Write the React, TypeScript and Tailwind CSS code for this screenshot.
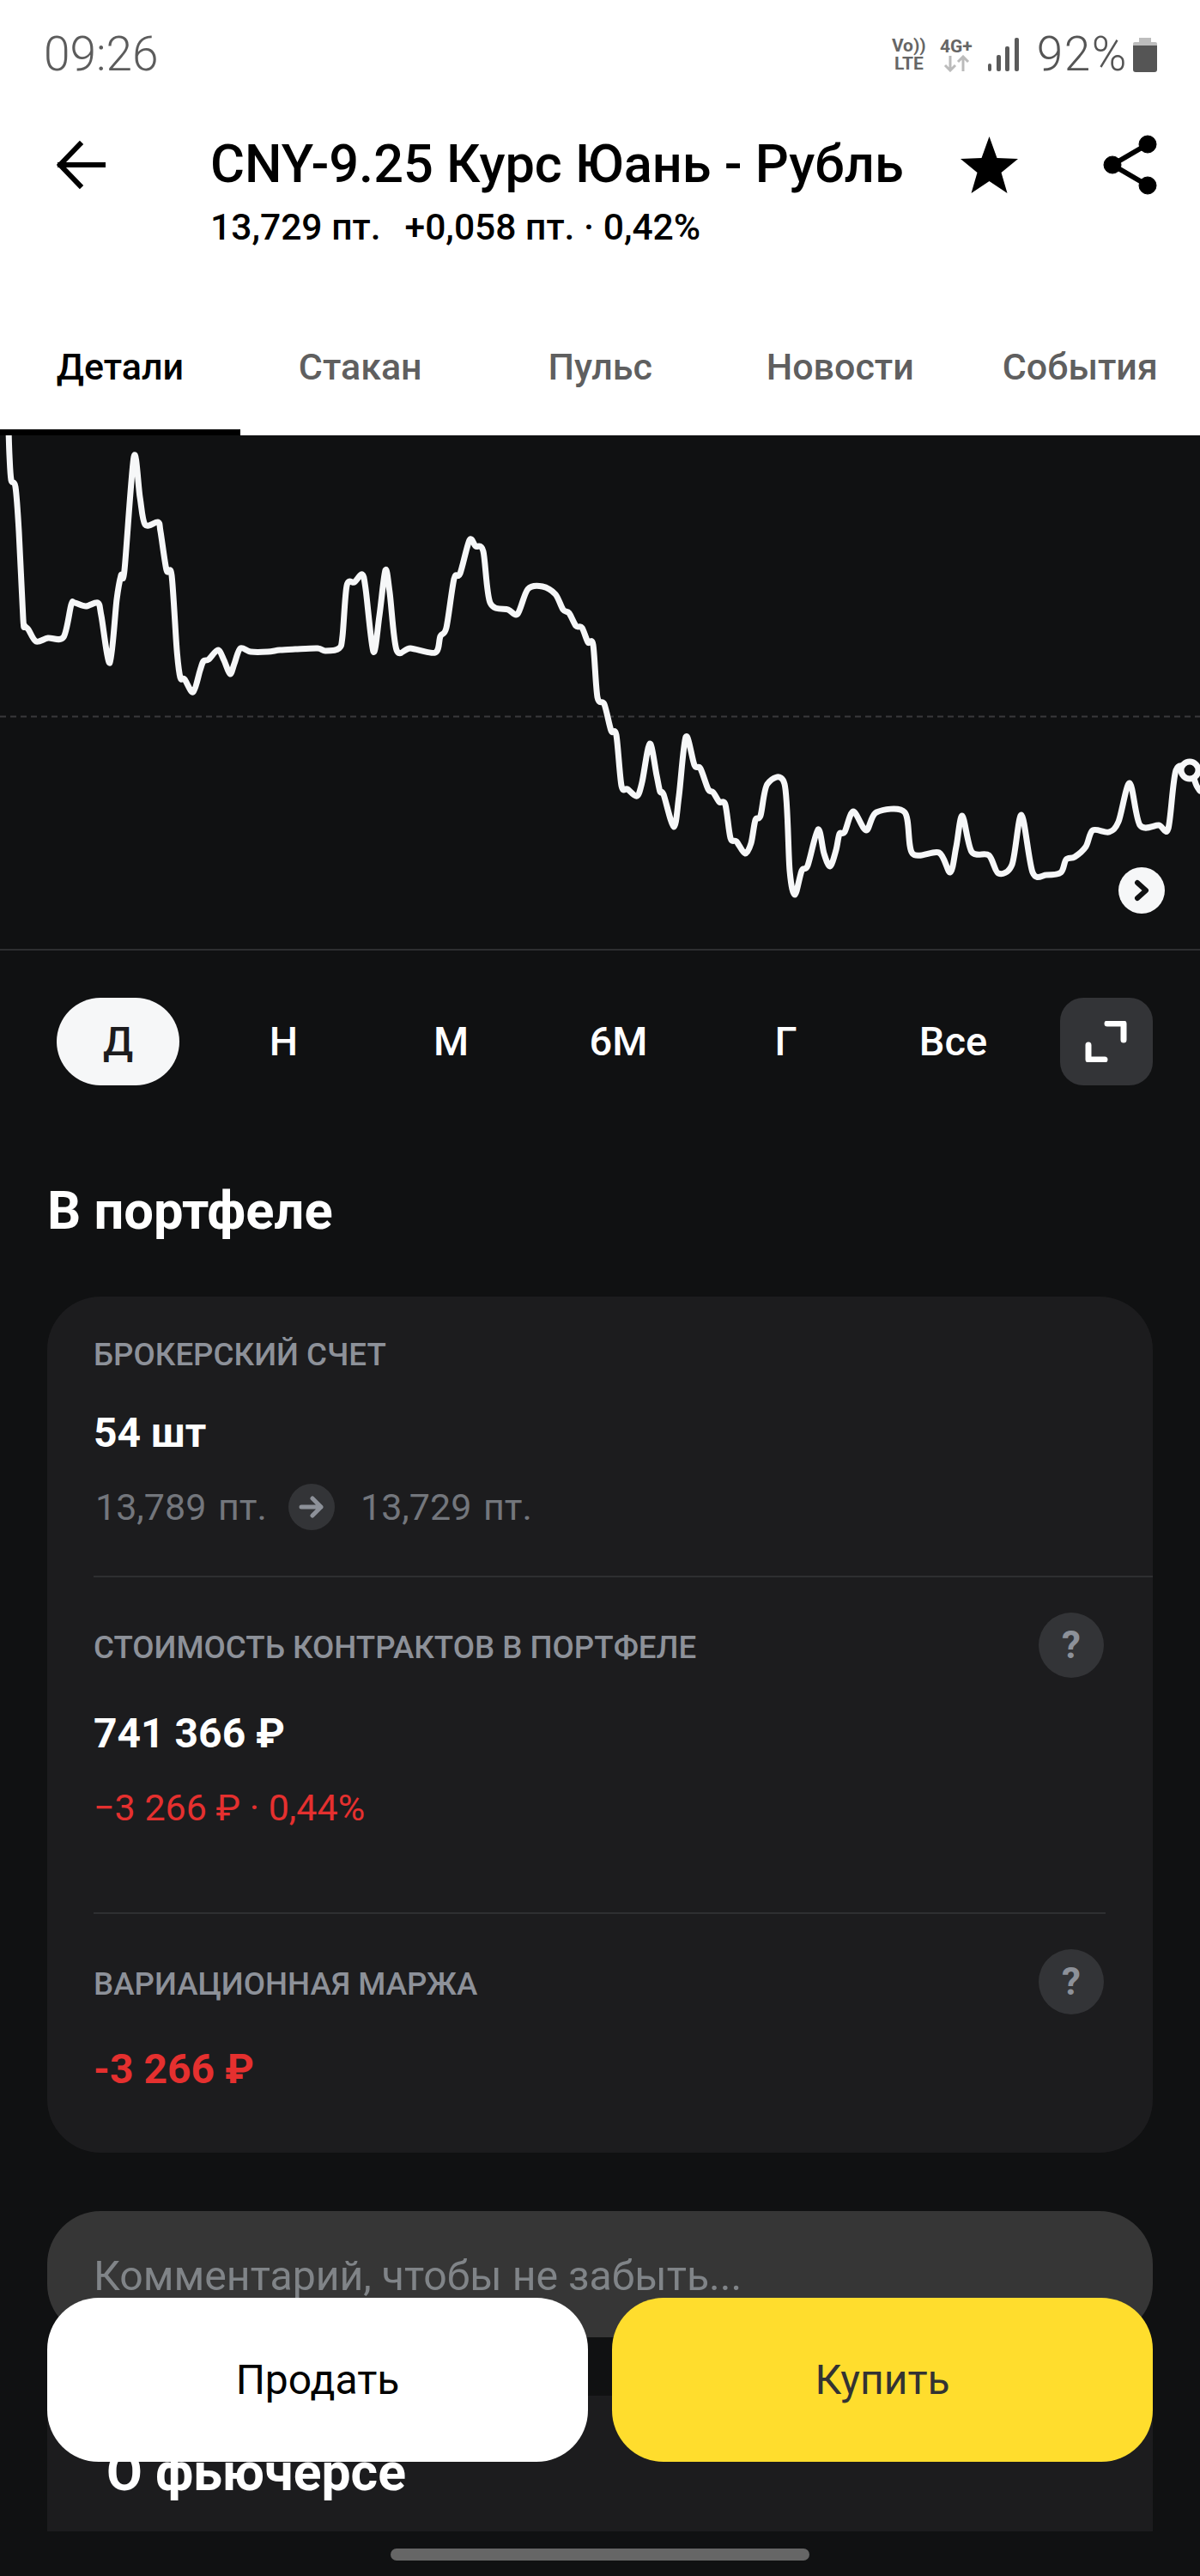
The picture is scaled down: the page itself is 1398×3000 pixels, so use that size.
import React from "react";

const pts: [number, number][] = [
[10,500],[11,530],[13,559],[18,567],[22,619],[27,721],[29,729],[33,733],[42,747],[56,743],[74,742],[83,704],[87,702],[100,706],[114,702],[118,717],[128,772],[136,698],[141,670],[145,664],[156,532],[163,579],[169,611],[184,608],[187,619],[194,664],[200,670],[206,757],[210,789],[215,791],[225,806],[233,781],[237,770],[243,768],[254,757],[261,769],[268,785],[273,773],[280,755],[292,759],[312,759],[326,757],[344,756],[370,755],[379,758],[395,755],[399,741],[404,682],[413,678],[422,669],[426,686],[435,759],[442,717],[449,664],[454,690],[462,757],[478,755],[507,760],[513,741],[520,731],[529,674],[536,668],[547,629],[554,636],[563,642],[571,702],[592,710],[603,715],[615,686],[632,683],[647,692],[656,710],[663,714],[671,729],[678,731],[685,748],[691,751],[696,812],[704,820],[712,851],[718,856],[724,915],[731,919],[742,927],[748,911],[757,866],[765,903],[769,922],[773,925],[785,963],[791,927],[799,858],[809,891],[816,895],[825,919],[831,923],[838,934],[845,937],[851,976],[858,980],[868,994],[875,982],[880,955],[886,950],[894,913],[914,913],[920,1014],[926,1042],[934,1014],[941,1008],[953,966],[960,994],[967,1009],[974,990],[978,971],[984,969],[994,945],[1009,967],[1021,946],[1054,946],[1063,994],[1094,993],[1107,1016],[1114,986],[1121,950],[1132,992],[1152,996],[1163,1017],[1179,1007],[1190,949],[1203,1016],[1219,1019],[1236,1016],[1242,1001],[1252,998],[1265,986],[1273,967],[1292,969],[1303,957],[1316,912],[1328,961],[1350,961],[1361,965],[1370,897],[1386,897],[1394,915],[1398,921]
];

function smooth(p: [number, number][]) {
  let d = `M${p[0][0]} ${p[0][1] - 507}`;
  for (let i = 0; i < p.length - 1; i++) {
    const a = p[Math.max(0, i - 1)], b = p[i], c = p[i + 1], e = p[Math.min(p.length - 1, i + 2)];
    const k = 0.15;
    d += ` C${b[0] + (c[0] - a[0]) * k} ${b[1] - 507 + (c[1] - a[1]) * k} ${c[0] - (e[0] - b[0]) * k} ${c[1] - 507 - (e[1] - b[1]) * k} ${c[0]} ${c[1] - 507}`;
  }
  return d;
}

function Help() {
  return (
    <div className="w-[76px] h-[76px] rounded-full bg-[#333437] flex items-center justify-center text-[44px] font-bold text-[#8d9199] leading-none">?</div>
  );
}

const periods = ["Н", "М", "6М", "Г", "Все"];

export default function App() {
  return (
    <div className="relative w-[1398px] h-[3000px] overflow-hidden bg-[#101112] font-['Roboto',sans-serif]">
      <div className="bg-white h-[507px] relative">
        {/* status bar */}
        <div className="h-[127px] pl-[51px] pr-[50px] flex items-center justify-between">
          <span className="text-[55px] text-[#5c5c5c] leading-none font-light">09:26</span>
          <div className="flex items-center text-[#555]">
            <div className="w-[40px] flex flex-col items-center font-bold text-[21px] leading-[21px] text-[#666] whitespace-nowrap">
              <span>Vo))</span><span>LTE</span>
            </div>
            <div className="w-[40px] ml-[15px] flex flex-col items-center">
              <span className="font-bold text-[21px] leading-[20px] text-[#666] whitespace-nowrap">4G+</span>
              <svg width="32" height="20" viewBox="0 0 32 20" fill="none" stroke="#bbb" strokeWidth="3">
                <path d="M9 1v17M3 12l6 6 6-6" /><path d="M24 19V2M18 8l6-6 6 6" />
              </svg>
            </div>
            <svg width="38" height="40" viewBox="0 0 38 40" className="ml-[16px]" fill="#5a5a5a">
              <rect x="1" y="30" width="4" height="9" rx="2" /><rect x="11" y="20" width="5" height="19" rx="2" /><rect x="21" y="10" width="5" height="29" rx="2" /><rect x="32" y="0" width="5" height="39" rx="2" />
            </svg>
            <span className="ml-[20px] text-[55px] leading-none font-light text-[#555] tracking-[1.5px]">92%</span>
            <svg width="28" height="40" viewBox="0 0 28 40" className="ml-[6px]">
              <rect x="7" y="0" width="14" height="6" fill="#bdbdbd" />
              <rect x="0" y="5" width="28" height="6" rx="2" fill="#bdbdbd" />
              <path d="M0 9h28v28a3 3 0 0 1-3 3H3a3 3 0 0 1-3-3z" fill="#555" />
            </svg>
          </div>
        </div>
        {/* header */}
        <div className="flex items-start h-[171px]">
          <svg width="58" height="58" viewBox="0 0 58 58" fill="none" stroke="#000" strokeWidth="6" strokeLinecap="square" className="ml-[66px] mt-[36px]">
            <path d="M4 29h50M27 5 4 29l23 24" />
          </svg>
          <div className="ml-[121px] w-[860px] shrink-0 mt-[29px]">
            <div className="text-[61.300px] leading-[70px] font-medium text-black whitespace-nowrap">CNY-9.25 Курс Юань - Рубль</div>
            <div className="text-[42.600px] leading-[50px] mt-[13px] font-medium text-black whitespace-nowrap flex">
              <span>13,729 пт.</span>
              <span className="ml-[28px]">+0,058 пт. · 0,42%</span>
            </div>
          </div>
          <svg width="68" height="66" viewBox="0 0 68 66" className="mt-[32px] ml-[14px]" fill="#000">
            <path d="M33.500 0l9 25 24.500 1-19.500 16 7 24-21-14-21 14 7-24L0 26l24.500-1z" />
          </svg>
          <svg width="64" height="70" viewBox="0 0 64 70" className="ml-[98px] mt-[30px]" fill="#000" stroke="#000">
            <path d="M52 11 11 35l41 24" fill="none" strokeWidth="6" />
            <circle cx="52" cy="11" r="10" /><circle cx="11" cy="35" r="10" /><circle cx="52" cy="59" r="10" />
          </svg>
        </div>
        {/* tabs */}
        <div className="flex h-[209px] items-start">
          <div className="w-[280px] h-[209px] flex items-end justify-center pb-[55px] relative text-[43px] font-medium text-black">
            <span className="leading-[50px]">Детали</span>
            <div className="absolute left-0 right-0 bottom-0 h-[7px] bg-black" />
          </div>
          {["Стакан", "Пульс", "Новости", "События"].map((t) => (
            <div key={t} className="w-[279.500px] h-[209px] flex items-end justify-center pb-[55px] text-[43px] font-medium text-[#5f5f5f]">
              <span className="leading-[50px]">{t}</span>
            </div>
          ))}
        </div>
      </div>

      {/* chart */}
      <div className="relative h-[600px] border-b-2 border-[#2d2e30]">
        <svg width="1398" height="598" viewBox="0 0 1398 598" className="block" fill="none">
          <path d="M0 327.500H1398" stroke="#39393b" strokeWidth="2" strokeDasharray="7 5" />
          <path d={smooth(pts)} stroke="#f6f7f8" strokeWidth="7" strokeLinejoin="round" strokeLinecap="round" />
          <circle cx="1386" cy="390" r="10" fill="#101112" stroke="#f6f7f8" strokeWidth="7" />
        </svg>
        <div className="absolute left-[1303px] top-[503px] w-[54px] h-[54px] rounded-full bg-[#f6f7f8] flex items-center justify-center">
          <svg width="22" height="26" viewBox="0 0 22 26" fill="none" stroke="#101112" strokeWidth="6" strokeLinecap="round" strokeLinejoin="round">
            <path d="M6 4l10 9-10 9" />
          </svg>
        </div>
      </div>

      {/* periods */}
      <div className="flex items-center h-[102px] mt-[55px] pl-[66px]">
        <div className="w-[143px] h-[102px] rounded-full bg-[#f6f7f8] text-[#1c1c1e] flex items-center justify-center text-[47px] font-medium">Д</div>
        <div className="flex ml-[24px]">
          {periods.map((p) => (
            <div key={p} className="w-[195px] text-center text-[47px] font-medium text-white leading-[102px]">{p}</div>
          ))}
        </div>
        <div className="ml-[27px] w-[108px] h-[102px] rounded-[27px] bg-[#333437] flex items-center justify-center">
          <svg width="50" height="48" viewBox="0 0 50 48" fill="none" stroke="#fff" strokeWidth="7" strokeLinecap="round" strokeLinejoin="round">
            <path d="M26 3h19v19M4 28v17h19" />
          </svg>
        </div>
      </div>

      <div className="ml-[55px] mt-[111px] text-[61.500px] leading-[70px] font-bold text-white">В портфеле</div>

      {/* portfolio card */}
      <div className="ml-[55px] mt-[65px] w-[1288px] h-[997px] rounded-[62px] bg-[#1c1c1e] pl-[54px] overflow-hidden">
        <div className="border-b-2 border-[#2e2f31] h-[327px] pt-[44px]">
          <div className="text-[36.700px] leading-[48px] font-medium text-[#8d9199]">БРОКЕРСКИЙ СЧЕТ</div>
          <div className="mt-[39px] text-[48px] leading-[56px] font-bold text-white">54 шт</div>
          <div className="mt-[31px] flex items-center text-[43px] leading-[54px] text-[#73767c] [word-spacing:3px]">
            <span className="ml-[2px] w-[225px] whitespace-pre">13,789 пт.</span>
            <div className="w-[54px] h-[54px] rounded-full bg-[#333437] flex items-center justify-center">
              <svg width="30" height="26" viewBox="0 0 30 26" fill="none" stroke="#8d9199" strokeWidth="5" strokeLinecap="round" strokeLinejoin="round">
                <path d="M3 13h23M16 3l10 10-10 10" />
              </svg>
            </div>
            <span className="ml-[30px] whitespace-pre">13,729 пт.</span>
          </div>
        </div>
        <div className="border-b-2 border-[#2e2f31] h-[392px] mr-[55px]">
          <div className="flex items-start justify-between pr-[2px] pt-[41px]">
            <div className="text-[36.700px] leading-[48px] font-medium text-[#8d9199] mt-[17px]">СТОИМОСТЬ КОНТРАКТОВ В ПОРТФЕЛЕ</div>
            <Help />
          </div>
          <div className="mt-[37px] text-[48px] leading-[56px] font-bold text-white">741 366 ₽</div>
          <div className="mt-[31px] text-[43px] leading-[54px] text-[#e5302f]">−3 266 ₽ · 0,44%</div>
        </div>
        <div className="mr-[55px]">
          <div className="flex items-start justify-between pr-[2px] pt-[41px]">
            <div className="text-[36.700px] leading-[48px] font-medium text-[#8d9199] mt-[17px]">ВАРИАЦИОННАЯ МАРЖА</div>
            <Help />
          </div>
          <div className="mt-[36px] text-[48px] leading-[56px] font-bold text-[#e5302f]">-3 266 ₽</div>
        </div>
      </div>

      {/* comment */}
      <div className="ml-[55px] mt-[68px] w-[1288px] h-[147px] rounded-[62px] bg-[#363636] pl-[54px] pt-[48px] text-[48.200px] leading-[56px] text-[#808488]">Комментарий, чтобы не забыть...</div>

      {/* about */}
      <div className="ml-[55px] mt-[68px] w-[1288px] h-[158px] bg-[#1c1c1e] pl-[69px] pt-[57px] text-[60.700px] leading-[66px] font-bold text-white">О фьючерсе</div>

      {/* gesture bar */}
      <div className="mx-auto mt-[20px] w-[488px] h-[14px] rounded-full bg-[#666]" />

      {/* action buttons */}
      <div className="absolute left-[55px] top-[2676px] w-[1288px] flex gap-[28px]">
        <div className="flex-1 h-[191px] rounded-[60px] bg-white flex items-center justify-center text-[48px] font-normal text-black">Продать</div>
        <div className="flex-1 h-[191px] rounded-[60px] bg-[#ffdd2d] flex items-center justify-center text-[48px] font-normal text-[#333]">Купить</div>
      </div>
    </div>
  );
}
